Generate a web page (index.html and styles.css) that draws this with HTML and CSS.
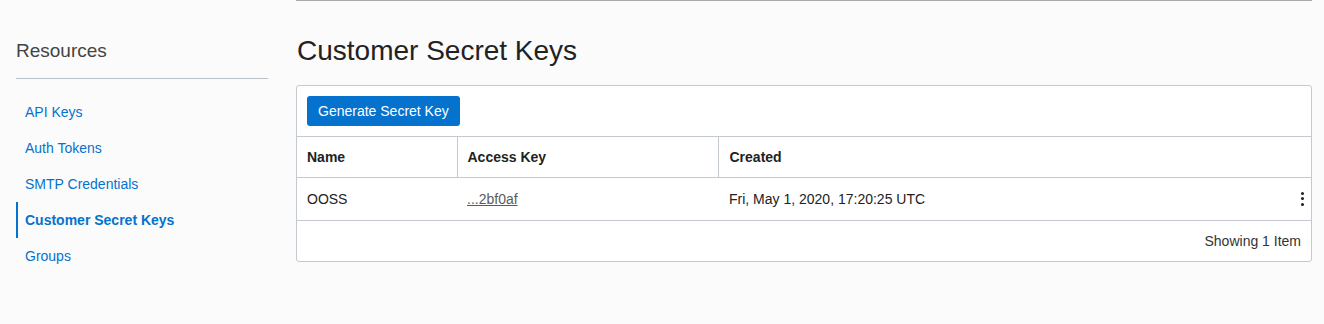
FILE: index.html
```html
<!DOCTYPE html>
<html lang="en">
<head>
<meta charset="utf-8">
<title>Customer Secret Keys</title>
<link rel="stylesheet" href="styles.css">
</head>
<body>
<div class="page">
  <aside class="sidebar">
    <h2 class="side-title">Resources</h2>
    <ul class="side-nav">
      <li><a href="#">API Keys</a></li>
      <li><a href="#">Auth Tokens</a></li>
      <li><a href="#">SMTP Credentials</a></li>
      <li class="active"><a href="#">Customer Secret Keys</a></li>
      <li><a href="#">Groups</a></li>
    </ul>
  </aside>
  <main class="main">
    <div class="top-rule"></div>
    <h1 class="title">Customer Secret Keys</h1>
    <section class="card">
      <div class="toolbar">
        <button class="btn-primary" type="button">Generate Secret Key</button>
      </div>
      <table class="grid">
        <colgroup>
          <col class="c-name">
          <col class="c-key">
          <col class="c-created">
        </colgroup>
        <thead>
          <tr>
            <th>Name</th>
            <th>Access Key</th>
            <th>Created</th>
          </tr>
        </thead>
        <tbody>
          <tr>
            <td>OOSS</td>
            <td><a class="key-link" href="#">...2bf0af</a></td>
            <td>
              <div class="created-cell">
                <span>Fri, May 1, 2020, 17:20:25 UTC</span>
                <span class="kebab" aria-label="Actions"><i></i><i></i><i></i></span>
              </div>
            </td>
          </tr>
        </tbody>
      </table>
      <div class="footer">Showing 1 Item</div>
    </section>
  </main>
</div>
</body>
</html>
```

FILE: styles.css
```css
* { box-sizing: border-box; }

html, body {
  margin: 0;
  padding: 0;
  background: #fbfbfb;
  font-family: "Liberation Sans", Arial, Helvetica, sans-serif;
  color: #222;
}

.page {
  display: flex;
  align-items: flex-start;
}

.sidebar {
  width: 268px;
  padding-left: 16px;
  flex: none;
}

.side-title {
  margin: 39px 0 0;
  font-size: 19px;
  line-height: 24px;
  font-weight: normal;
  color: #444;
  padding-bottom: 15px;
  border-bottom: 1px solid #b9c1c9;
}

.side-nav {
  list-style: none;
  margin: 15px 0 0;
  padding: 0;
}

.side-nav li {
  height: 36px;
  display: flex;
  align-items: center;
  padding-left: 9px;
  border-left: 2px solid transparent;
}

.side-nav li a {
  font-size: 14px;
  color: #0572ce;
  text-decoration: none;
  margin-left: -2px;
}

.side-nav li.active {
  border-left-color: #0572ce;
}

.side-nav li.active a {
  font-weight: bold;
}

.main {
  margin-left: 28px;
  width: 1016px;
  flex: none;
}

.top-rule {
  height: 1px;
  background: #a8a8a8;
}

.title {
  margin: 34px 0 0 1px;
  font-size: 28px;
  line-height: 32px;
  font-weight: normal;
  color: #222;
}

.card {
  margin-top: 18px;
  background: #fff;
  border: 1px solid #c3c9cf;
  border-radius: 3px;
  overflow: hidden;
}

.toolbar {
  padding: 10px;
  border-bottom: 1px solid #c3c9cf;
}

.btn-primary {
  height: 30px;
  padding: 0 11px;
  border: 0;
  border-radius: 3px;
  background: #0572ce;
  color: #fff;
  font-family: inherit;
  font-size: 14px;
  cursor: pointer;
}

.grid {
  width: 100%;
  border-collapse: collapse;
  table-layout: fixed;
  font-size: 14px;
}

.c-name { width: 160px; }
.c-key { width: 261px; }

.grid th {
  height: 40px;
  text-align: left;
  font-weight: bold;
  padding: 0 10px;
  border-bottom: 1px solid #c3c9cf;
  border-left: 1px solid #c3c9cf;
}

.grid th:first-child { border-left: 0; }

.grid td {
  height: 43px;
  padding: 0 10px;
  border-bottom: 1px solid #c3c9cf;
}

.grid th:nth-child(3),
.grid td:nth-child(3) { padding-left: 11px; }

.key-link {
  color: #5b5b5b;
  text-decoration: underline;
}

.created-cell {
  display: flex;
  align-items: center;
  justify-content: space-between;
}

.kebab {
  display: flex;
  flex-direction: column;
  align-items: center;
  gap: 2.5px;
  width: 6px;
  margin-right: -4px;
}

.kebab i {
  display: block;
  width: 3px;
  height: 3px;
  border-radius: 50%;
  background: #222;
}

.footer {
  height: 40px;
  display: flex;
  align-items: center;
  justify-content: flex-end;
  padding-right: 10px;
  font-size: 14px;
  color: #333;
}
```
